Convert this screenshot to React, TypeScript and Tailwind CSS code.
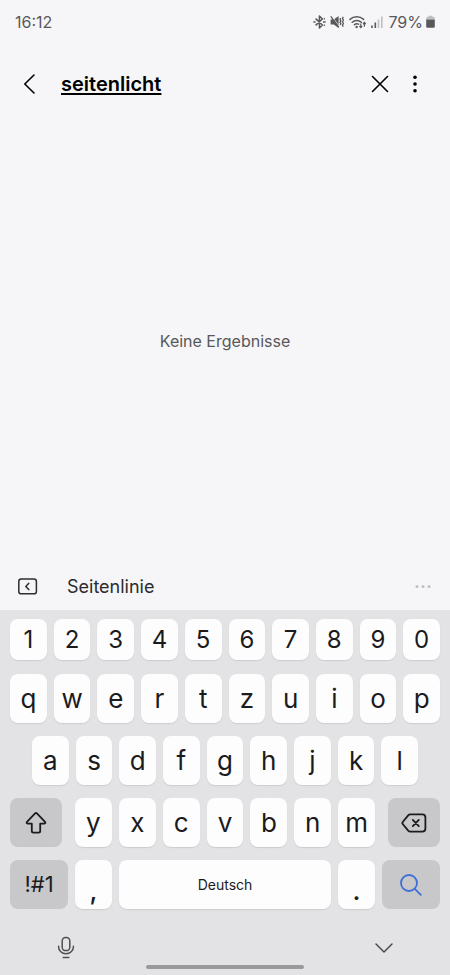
import React from "react";
import clsx from "clsx";

const NUMBER_ROW = ["1", "2", "3", "4", "5", "6", "7", "8", "9", "0"];
const TOP_ROW = ["q", "w", "e", "r", "t", "z", "u", "i", "o", "p"];
const HOME_ROW = ["a", "s", "d", "f", "g", "h", "j", "k", "l"];
const BOTTOM_ROW = ["y", "x", "c", "v", "b", "n", "m"];

interface KeyProps {
  children: React.ReactNode;
  label?: string;
  className?: string;
  dark?: boolean;
}

function Key({ children, label, className, dark = false }: KeyProps) {
  return (
    <button
      type="button"
      aria-label={label}
      className={clsx(
        "flex min-w-0 items-center justify-center rounded-lg text-[#1b1b1d]",
        dark ? "bg-[#c8c8ca]" : "bg-[#fdfdfe] shadow-[0_1px_1px_#cdcdd0]",
        className,
      )}
    >
      {children}
    </button>
  );
}

function StatusBar() {
  return (
    <header className="flex h-11 items-center justify-between px-[15px] text-[#59595b]">
      <time className="text-base">16:12</time>
      <div className="flex items-center">
        <svg width="13" height="16" viewBox="0 0 13 16" fill="none" stroke="currentColor" strokeWidth="1.5" role="img" aria-label="Bluetooth">
          <path d="M2.6 4.6 9.4 11 6.4 14V2l3 3-6.8 6.4" strokeLinejoin="round" />
          <path d="M.4 8h2.2M10 8h2.6M10.9 5.2l.9-.8M10.9 10.8l.9.8" />
        </svg>
        <svg className="ml-1" width="15" height="16" viewBox="0 0 15 16" fill="none" stroke="currentColor" strokeWidth="1.3" role="img" aria-label="Lautlos">
          <path d="M.6 5.6h3.2L8.6 2v12L3.8 10.4H.6z" fill="currentColor" stroke="none" />
          <path d="M1.8 2.2 9.8 13" stroke="#f6f6f8" strokeWidth=".8" />
          <path d="M.8 2.4 8.8 13.4" />
          <path d="M10.6 4l-.6 1.4.9 1.4-.9 1.4.9 1.4-.6 1.4M13.2 2.8l-.7 1.6.9 1.7-.9 1.7.9 1.7-.9 1.7.7 1.6" />
        </svg>
        <svg className="ml-1" width="18" height="16" viewBox="0 0 18 16" fill="none" stroke="currentColor" strokeWidth="1.5" role="img" aria-label="WLAN">
          <path d="M1 5.4a10 10 0 0 1 13.6 0M3.2 8.2a6.8 6.8 0 0 1 9.2 0M5.4 10.8a3.6 3.6 0 0 1 4.2-.6" strokeLinecap="round" />
          <circle cx="7.6" cy="13" r="1.2" fill="currentColor" stroke="none" />
          <path d="M11.8 9.6v4M10.4 12.2l1.4 1.5 1.4-1.5M15.4 12.8V8.6M14 10l1.4-1.5L16.8 10" strokeWidth="1.2" />
        </svg>
        <svg className="ml-1" width="12" height="16" viewBox="0 0 12 16" fill="currentColor" role="img" aria-label="Signal">
          <path d="M.2 11.6h1.6V14H.2zM3.5 8.6h1.6V14H3.5z" />
          <path d="M6.7 5.4h1.6V14H6.7zM10 2.4h1.6V14H10z" opacity=".35" />
        </svg>
        <span className="ml-[5px] text-base">79%</span>
        <svg className="ml-[3px]" width="9" height="14" viewBox="0 0 9 14" fill="currentColor" role="img" aria-label="Akku">
          <path d="M2.6.8h3.8v1h.8a1.6 1.6 0 0 1 1.6 1.6v1H.2v-1a1.6 1.6 0 0 1 1.6-1.6h.8z" opacity=".35" />
          <path d="M.2 4.4h8.6v7a1.4 1.4 0 0 1-1.4 1.4H1.6A1.4 1.4 0 0 1 .2 11.4z" />
        </svg>
      </div>
    </header>
  );
}

function SearchBar() {
  return (
    <form role="search" className="flex h-20 items-center pr-[25px] pl-5 text-black">
      <button type="button" aria-label="Zurück">
        <svg width="20" height="24" viewBox="0 0 20 24" fill="none" stroke="currentColor" strokeWidth="1.6" strokeLinecap="round" strokeLinejoin="round">
          <path d="M14 3 4.8 12l9.2 9" />
        </svg>
      </button>
      <input
        type="text"
        aria-label="Suche"
        defaultValue="seitenlicht"
        className="ml-[21px] min-w-0 flex-1 bg-transparent text-xl font-semibold underline decoration-2 underline-offset-2 outline-none"
      />
      <button type="button" aria-label="Löschen">
        <svg width="20" height="20" viewBox="0 0 20 20" fill="none" stroke="currentColor" strokeWidth="1.6" strokeLinecap="round">
          <path d="M2.5 2.5l15 15M17.5 2.5l-15 15" />
        </svg>
      </button>
      <button type="button" aria-label="Weitere Optionen" className="ml-[15px]">
        <svg width="20" height="20" viewBox="0 0 20 20" fill="currentColor">
          <circle cx="10" cy="3.2" r="1.8" />
          <circle cx="10" cy="10" r="1.8" />
          <circle cx="10" cy="16.8" r="1.8" />
        </svg>
      </button>
    </form>
  );
}

function SuggestionBar() {
  return (
    <div className="flex h-12 items-center px-[18px] pt-0.5">
      <button type="button" aria-label="Symbolleiste öffnen">
        <svg width="20" height="18" viewBox="0 0 20 18" fill="none" stroke="#2e2e30" strokeWidth="1.5" strokeLinecap="round" strokeLinejoin="round">
          <rect x=".8" y="1" width="17.6" height="14.8" rx="2.4" />
          <path d="M10.8 5.2 7.8 8.4l3 3.2" />
        </svg>
      </button>
      <button type="button" className="ml-[29px] text-lg text-[#2b2b2d]">
        Seitenlinie
      </button>
      <button type="button" aria-label="Mehr" className="ml-auto">
        <svg width="18" height="6" viewBox="0 0 18 6" fill="#c0c0c3">
          <circle cx="3" cy="2.6" r="1.5" />
          <circle cx="9" cy="2.6" r="1.5" />
          <circle cx="15" cy="2.6" r="1.5" />
        </svg>
      </button>
    </div>
  );
}

function Keyboard() {
  return (
    <section aria-label="Tastatur" className="bg-[#e3e3e5] pt-[9px]">
      <div className="flex flex-col gap-[13px] px-[10px]">
        <div className="mb-px flex h-[41px] gap-[7px] text-2xl">
          {NUMBER_ROW.map((char) => (
            <Key key={char} className="flex-1">{char}</Key>
          ))}
        </div>
        <div className="flex h-[49px] gap-[7px] text-[26px]">
          {TOP_ROW.map((char) => (
            <Key key={char} className="flex-1">{char}</Key>
          ))}
        </div>
        <div className="flex h-[49px] gap-[7px] px-[22px] text-[26px]">
          {HOME_ROW.map((char) => (
            <Key key={char} className="flex-1">{char}</Key>
          ))}
        </div>
        <div className="flex h-[49px] gap-[13px] text-[26px]">
          <Key dark label="Umschalttaste" className="w-[52px]">
            <svg width="22" height="24" viewBox="0 0 22 24" fill="none" stroke="currentColor" strokeWidth="1.8" strokeLinejoin="round">
              <path d="M10.1 2.4 2 10.9c-.7.8-.4 1.7.6 1.7h4.2v7.4c0 1 .6 1.6 1.6 1.6h5.2c1 0 1.6-.6 1.6-1.6v-7.4h4.2c1 0 1.3-.9.6-1.7L11.9 2.4c-.6-.6-1.2-.6-1.8 0z" />
            </svg>
          </Key>
          <div className="flex flex-1 gap-[7px]">
            {BOTTOM_ROW.map((char) => (
              <Key key={char} className="flex-1">{char}</Key>
            ))}
          </div>
          <Key dark label="Rücktaste" className="w-[52px]">
            <svg width="26" height="20" viewBox="0 0 26 20" fill="none" stroke="currentColor" strokeWidth="1.8" strokeLinecap="round" strokeLinejoin="round">
              <path d="M9.4 1.4h12a3 3 0 0 1 3 3v11.2a3 3 0 0 1-3 3h-12a3 3 0 0 1-2.2-1L1.9 11.2a1.8 1.8 0 0 1 0-2.4l5.3-6.4a3 3 0 0 1 2.2-1z" />
              <path d="M11.8 6.9l6 6.2M17.8 6.9l-6 6.2" />
            </svg>
          </Key>
        </div>
        <div className="flex h-[49px] gap-[7px] text-[26px]">
          <Key dark label="Symbole" className="w-[58px] text-[22px]">!#1</Key>
          <Key className="w-[37px] pt-3 font-medium">,</Key>
          <Key label="Leertaste Deutsch" className="flex-1 text-sm">Deutsch</Key>
          <Key className="w-[37px] pt-3 font-medium">.</Key>
          <Key dark label="Suchen" className="w-[58px]">
            <svg width="24" height="24" viewBox="0 0 24 24" fill="none" stroke="#3f6fd6" strokeWidth="1.8" strokeLinecap="round">
              <circle cx="10" cy="10" r="8" />
              <path d="M15.8 15.8l6 6" />
            </svg>
          </Key>
        </div>
      </div>

      <nav className="grid h-[66px] grid-cols-[1fr_158px_1fr]">
        <button type="button" aria-label="Spracheingabe" className="mt-3 mr-3.5 flex items-center justify-center">
          <svg width="18" height="24" viewBox="0 0 18 24" fill="none" stroke="#4f4f51" strokeWidth="1.5" strokeLinecap="round">
            <rect x="5.2" y="1.6" width="7.6" height="13" rx="3.4" />
            <path d="M1.6 10.2v.8a7.4 6.8 0 0 0 14.8 0v-.8M6.2 21.4h5.6" />
          </svg>
        </button>
        <span className="mb-[6px] h-1 self-end rounded-full bg-[#99999b]" />
        <button type="button" aria-label="Tastatur ausblenden" className="mt-3 ml-3.5 flex items-center justify-center">
          <svg width="20" height="20" viewBox="0 0 20 20" fill="none" stroke="#4a4a4c" strokeWidth="1.5" strokeLinecap="round" strokeLinejoin="round">
            <path d="M2 6l8 8 8-8" />
          </svg>
        </button>
      </nav>
    </section>
  );
}

export default function App() {
  return (
    <div className="flex min-h-screen flex-col bg-[#f6f6f8] font-['Inter','Liberation_Sans',sans-serif]">
      <StatusBar />
      <SearchBar />
      <main className="flex flex-1 items-center justify-center pb-1">
        <p className="text-base text-[#58585a]">Keine Ergebnisse</p>
      </main>
      <SuggestionBar />
      <Keyboard />
    </div>
  );
}
